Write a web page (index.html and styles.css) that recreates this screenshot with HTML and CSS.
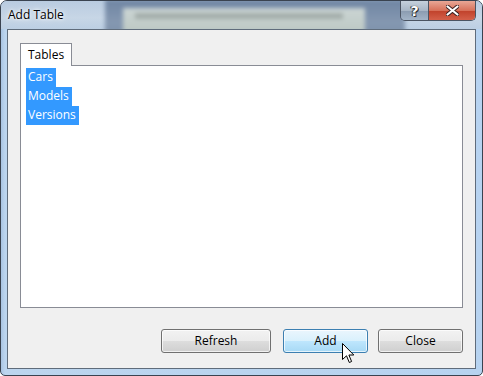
FILE: index.html
```html
<!DOCTYPE html>
<html>
<head>
<meta charset="UTF-8">
<title>Add Table</title>
<link rel="stylesheet" href="styles.css">
</head>
<body>
<div class="window">
    <div class="titlebar">
        <span class="caption">Add Table</span>
        <div class="capbtns">
            <div class="capbtn help">?</div>
            <div class="capbtn close">
                <svg width="13" height="11" viewBox="0 0 13 11"><path d="M1.5 1.5 L11.5 9.5 M11.5 1.5 L1.5 9.5" stroke="#3a2020" stroke-width="4" stroke-linecap="round"/><path d="M1.5 1.5 L11.5 9.5 M11.5 1.5 L1.5 9.5" stroke="#fff" stroke-width="2.2" stroke-linecap="round"/></svg>
            </div>
        </div>
    </div>
    <div class="client">
        <div class="tabs">
            <div class="tab">Tables</div>
        </div>
        <div class="panel">
            <div class="item">Cars</div>
            <div class="item">Models</div>
            <div class="item">Versions</div>
        </div>
        <div class="buttons">
            <div class="button1 wide">Refresh</div>
            <div class="button1 hot">Add</div>
            <div class="button1">Close</div>
        </div>
    </div>
    <svg class="cursor" width="13" height="21" viewBox="0 0 13 21">
        <path d="M0.5 0.5 L0.5 16.5 L4.5 12.8 L7.3 19.5 L9.6 18.5 L6.9 12 L11.8 12 Z" fill="#fff" stroke="#000" stroke-width="1" stroke-linejoin="miter"/>
    </svg>
</div>
</body>
</html>
```

FILE: styles.css
```css
        body {
            margin: 0;
            font-family: "Open Sans", "Noto Sans", sans-serif;
            font-size: 12px;
            color: #000;
        }
        .window {
            position: relative;
            width: 483px;
            height: 376px;
            box-sizing: border-box;
            border: 1px solid #3a4350;
            border-radius: 7px 7px 5px 5px;
            background: linear-gradient(90deg, #a9c4e2 0, #bcd5ee 4px, #b7d3f0 100%);
            display: flex;
            flex-direction: column;
            overflow: hidden;
        }
        .titlebar {
            position: relative;
            height: 28px;
            display: flex;
            align-items: flex-start;
            overflow: hidden;
            background: linear-gradient(#b9cbe0, #c7d6e6 60%, #bccfe3);
        }
        /* blurred window behind the glass */
        .titlebar::before {
            content: "";
            position: absolute;
            left: 104px;
            top: -2px;
            width: 300px;
            height: 34px;
            background:
                linear-gradient(#a3adaa, #a3adaa) 30px 14px / 208px 6px no-repeat,
                linear-gradient(#cbd5d4, #bdc9c4) 18px 9px / 242px 24px no-repeat,
                linear-gradient(#6f85a3, #8598b1 70%, #7d91ab);
            filter: blur(2px);
        }
        .caption {
            position: relative;
            line-height: 28px;
            padding-left: 7px;
            text-shadow: 0 0 6px #fff, 0 0 3px #fff;
        }
        .capbtns {
            position: relative;
            margin-left: auto;
            margin-right: 6px;
            display: flex;
            height: 19px;
            border: 1px solid #4b5462;
            border-top: none;
            border-radius: 0 0 5px 5px;
            overflow: hidden;
        }
        .capbtn {
            display: flex;
            align-items: center;
            justify-content: center;
        }
        .help {
            width: 27px;
            border-right: 1px solid #4b5462;
            background: linear-gradient(#c5d0dc, #a8b6c6 50%, #8a9bb0 51%, #a3b4c7);
            color: #fff;
            font-family: "DejaVu Sans", sans-serif;
            font-weight: bold;
            font-size: 14px;
            text-shadow: 0 0 1px #222, 1px 1px 0 #333, -1px 0 0 #333;
        }
        .close {
            width: 46px;
            background: linear-gradient(#e8a796, #d7715a 50%, #c0412a 51%, #d4604a);
        }
        .client {
            flex: 1;
            margin: 0 6px 6px 6px;
            border: 1px solid #5f6c7b;
            background-color: #f0f0f0;
            padding: 13px 12px 15px 12px;
            display: flex;
            flex-direction: column;
        }
        .tabs {
            display: flex;
            position: relative;
            z-index: 1;
            margin-bottom: -1px;
        }
        .tab {
            height: 22px;
            line-height: 21px;
            padding: 0 7px 0 7px;
            border: 1px solid #898c95;
            border-bottom: none;
            background-color: #fff;
        }
        .panel {
            flex: 1;
            border: 1px solid #898c95;
            background-color: #fff;
            padding: 2px 5px;
        }
        .item {
            width: fit-content;
            height: 19px;
            line-height: 18px;
            padding: 0 3px 0 2px;
            background-color: #3399ff;
            color: #fff;
        }
        .buttons {
            display: flex;
            justify-content: flex-end;
            margin-top: 21px;
        }
        .button1 {
            width: 83px;
            height: 22px;
            line-height: 21px;
            text-align: center;
            border: 1px solid #707070;
            border-radius: 3px;
            background: linear-gradient(#f2f2f2, #ebebeb 50%, #dddddd 51%, #cfcfcf);
            box-shadow: inset 0 0 0 1px rgba(255,255,255,0.7);
            margin-left: 10px;
        }
        .wide {
            width: 108px;
        }
        .hot {
            margin-left: 12px;
            border-color: #3c7fb1;
            background: linear-gradient(#eaf6fd, #d9f0fc 50%, #bee6fd 51%, #a7d9f5);
        }
        .cursor {
            position: absolute;
            left: 341px;
            top: 342px;
        }
```
